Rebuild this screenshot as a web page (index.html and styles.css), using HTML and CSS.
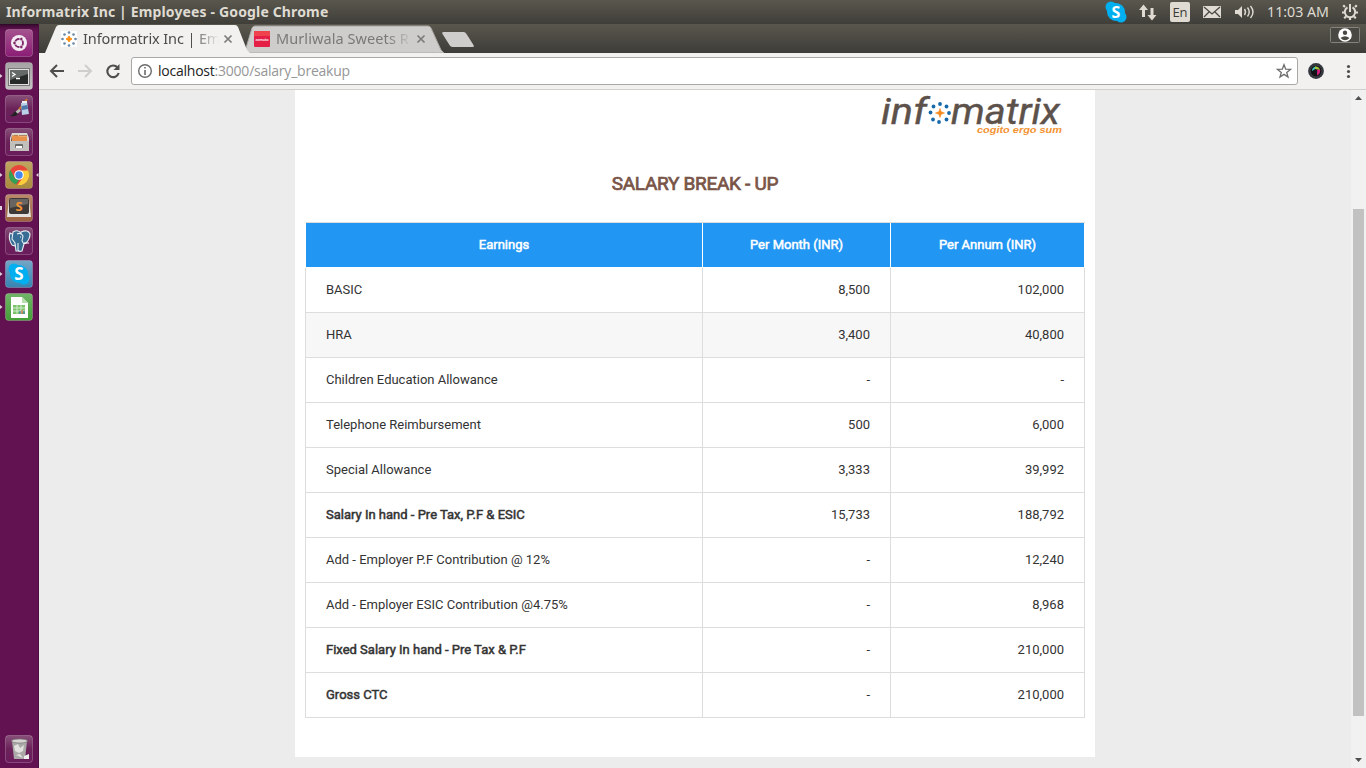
FILE: index.html
```html
<!DOCTYPE html>
<html lang="en">
<head>
<meta charset="utf-8">
<title>Informatrix Inc | Employees</title>
<link rel="stylesheet" href="styles.css">
</head>
<body>
<div class="desktop">
<header class="panel">
  <span class="panel-title">Informatrix Inc | Employees - Google Chrome</span>
  <svg class="indicators" width="266" height="24" viewBox="1100 0 266 24">
    <g fill="#00aff0"><circle cx="1116" cy="12" r="9"/><circle cx="1111" cy="7" r="5.500"/><circle cx="1121" cy="17" r="5.500"/></g>
    <text x="1116" y="18" class="skype-s">S</text>
    <g fill="#dfdbd2">
      <path d="M1143.500 4.500l4.500 5.500h-3v7h-3v-7h-3zM1152 20.500l-4.500-5.500h3V8h3v7h3z"/>
      <rect x="1170" y="2" width="20" height="20" rx="2"/>
      <rect x="1203" y="6" width="18" height="12" rx=".5"/>
      <path d="M1235 10h3l4-4v12l-4-4h-3z"/>
    </g>
    <text x="1180" y="17" class="lang">En</text>
    <path d="M1204 7l8 7 8-7M1204 17l5-5M1220 17l-5-5" fill="none" stroke="#494842" stroke-width="1.300"/>
    <path d="M1244.500 9q2 3 0 6M1247.500 7.500q3.500 4.500 0 9M1250.500 6q5 6 0 12" fill="none" stroke="#dfdbd2" stroke-width="1.400"/>
    <text x="1267" y="17" class="clock" textLength="62" lengthAdjust="spacingAndGlyphs">11:03 AM</text>
    <g fill="none" stroke="#dfdbd2">
      <path d="M1347.500 7.400a5.200 5.200 0 1 0 5 0" stroke-width="2"/>
      <path d="M1350 4v8" stroke-width="2"/>
      <path d="M1345 7l-1.800-1.800M1355 7l1.800-1.800M1344.500 12.500H1342M1355.500 12.500h2.500M1346 16.500l-1.800 1.800M1354 16.500l1.800 1.800M1350 17.500V20" stroke-width="2.200"/>
    </g>
  </svg>
</header>
<div class="workspace">
<nav class="launcher">
  <svg width="39" height="744" viewBox="0 24 39 744">
    <defs>
      <linearGradient id="dash" x2="0" y2="1"><stop stop-color="#a5538f"/><stop offset="1" stop-color="#8b1d75"/></linearGradient>
      <linearGradient id="silver" x2="0" y2="1"><stop stop-color="#a6a3a5"/><stop offset="1" stop-color="#c4c2c3"/></linearGradient>
      <linearGradient id="plum" x2="0" y2="1"><stop stop-color="#875079"/><stop offset=".5" stop-color="#6b2259"/><stop offset="1" stop-color="#6b1c5c"/></linearGradient>
      <linearGradient id="gold" x2="0" y2="1"><stop stop-color="#c0a561"/><stop offset="1" stop-color="#a98b3d"/></linearGradient>
      <linearGradient id="copper" x2="0" y2="1"><stop stop-color="#b98a6b"/><stop offset="1" stop-color="#9c623f"/></linearGradient>
      <linearGradient id="sky" x2="0" y2="1"><stop stop-color="#74a6c6"/><stop offset="1" stop-color="#3684b2"/></linearGradient>
      <linearGradient id="leaf" x2="0" y2="1"><stop stop-color="#71b469"/><stop offset="1" stop-color="#44a036"/></linearGradient>
      <linearGradient id="shade" x2="0" y2="1"><stop stop-color="#2d0825"/><stop offset="1" stop-color="#621151" stop-opacity="0"/></linearGradient>
    </defs>
    <rect y="24" width="39" height="8" fill="url(#shade)"/>
    <path d="M38.500 24V768" stroke="#4d0d40"/>
    <g stroke="#fff" stroke-opacity=".22">
      <rect x="5.500" y="29.500" width="27" height="27" rx="3" fill="url(#dash)"/>
      <rect x="5.500" y="62.500" width="27" height="27" rx="3" fill="url(#silver)"/>
      <rect x="5.500" y="95.500" width="27" height="27" rx="3" fill="url(#plum)"/>
      <rect x="5.500" y="128.500" width="27" height="27" rx="3" fill="url(#plum)"/>
      <rect x="5.500" y="161.500" width="27" height="27" rx="3" fill="url(#gold)"/>
      <rect x="5.500" y="194.500" width="27" height="27" rx="3" fill="url(#copper)"/>
      <rect x="5.500" y="227.500" width="27" height="27" rx="3" fill="url(#plum)"/>
      <rect x="5.500" y="260.500" width="27" height="27" rx="3" fill="url(#sky)"/>
      <rect x="5.500" y="293.500" width="27" height="27" rx="3" fill="url(#leaf)"/>
      <rect x="5.500" y="735.500" width="27" height="27" rx="3" fill="url(#plum)"/>
    </g>
    <circle cx="19" cy="43" r="8" fill="#fff" opacity=".9"/>
    <circle cx="19" cy="43" r="4" fill="none" stroke="#7c2668" stroke-width="1.800"/>
    <g fill="#7c2668" stroke="#fff" stroke-width=".6"><circle cx="14.500" cy="43" r="1.700"/><circle cx="21.300" cy="39" r="1.700"/><circle cx="21.300" cy="47" r="1.700"/></g>
    <rect x="8.500" y="68.500" width="21" height="17" fill="#e1e0df" stroke="#777"/>
    <rect x="10" y="70" width="18" height="14" fill="#272b2a"/><path d="M10 70h18v4L10 80z" fill="#656967"/>
    <path d="M12 72.500l3 2-3 2M16 78.500h4" fill="none" stroke="#fff" stroke-width="1.300"/>
    <path d="M27 99l-9 12" stroke="#c9762c" stroke-width="2"/><path d="M19 109l2 2-4 3-2-2z" fill="#bbb"/><path d="M15 111l3 3q-2 3-8 2 3-1 5-5" fill="#222"/>
    <path d="M21 103l6-1 2 12-7 1z" fill="#b9d0e8"/><path d="M21.500 106l6-1 .5 4-6 1z" fill="#4d76a9"/><path d="M22 102h5" stroke="#eee" stroke-width="2"/>
    <path d="M12 133h15l2 5v13H10v-13z" fill="#d9d7d4"/><path d="M12 135h15v6H11z" fill="#674634"/><path d="M12 136h15v5H12z" fill="#e9904b"/><path d="M12 136l2-1h4l1 1h8" fill="none" stroke="#f5c28a"/>
    <rect x="10" y="141" width="19" height="10" rx="1" fill="#c1c0bd"/><rect x="15" y="144" width="8" height="4" rx="1" fill="#6c6a67"/><rect x="16" y="146" width="6" height="2" fill="#fff"/>
    <circle cx="19" cy="175" r="10" fill="#e9463b"/><path d="M10.300 170l4.500 8 4.200 2-3 4.600A10 10 0 0 1 10.300 170" fill="#34a054"/><path d="M19 170.500h9a10 10 0 0 1-10.500 14.400l5.500-7.500z" fill="#fdcd3c"/><circle cx="19" cy="175" r="4.800" fill="#fff"/><circle cx="19" cy="175" r="3.700" fill="#4687ed"/>
    <path d="M9 199h20l2 18H7z" fill="#e5e1dd"/><rect x="9" y="198" width="20" height="16" rx="2" fill="#3d3a38"/><path d="M10 199h18v5l-18 4z" fill="#686462"/>
    <text x="19" y="210.500" class="sublime-s">S</text>
    <g stroke="#e5edf3" stroke-width="1.100" fill="#376c94"><path d="M10 233q-2 6 2 12l3 1 1-5-2-6z"/><path d="M13 232q5-3 8 1l1 7-3 5v6h-3l-1-8-3-4z"/><path d="M21 232q7-3 9 2 0 5-4 9l-4 1-2-5z"/><path d="M17 234q4-2 6 2l-1 5 2 3-2 7q-3 1-4-1v-7"/></g><path d="M20 237h1M24 243h5" stroke="#fff"/>
    <g fill="#00aff0"><circle cx="19" cy="274" r="9"/><circle cx="14" cy="269" r="5.500"/><circle cx="24" cy="279" r="5.500"/></g>
    <text x="19" y="280" class="skype-s dock-s">S</text>
    <path d="M11 297h11l6 6v15H11z" fill="#fff"/><path d="M22 297l6 6h-6z" fill="#b7dfae"/><rect x="13" y="305" width="12" height="9" fill="#7cc46c"/><path d="M13 308h12M13 311h12M17 305v9M21 305v9" stroke="#e6f5e3" stroke-width=".8"/><path d="M20 314v-3M24 314v-3" stroke="#2870a8"/><path d="M22 314v-4" stroke="#e8503a"/>
    <path d="M12 741h15l-2 18H14z" fill="#aaa9a8"/><ellipse cx="19.500" cy="741" rx="8" ry="2" fill="#d7d6d4" stroke="#777" stroke-width=".7"/><path d="M14 746l4-2 2 4 4-3-1 6-4 2-4-2zM16 755l4-1 3 4" fill="#e2e1df"/><path d="M24 756l5-2v5h-5z" fill="#eee"/>
    <g fill="#ded3dc"><path d="M0 74l2.500 2L0 78zM0 173l2.500 2L0 177zM0 206h2v4H0zM0 272l2.500 2L0 276zM0 305l2.500 2L0 309zM38.500 173l-2.500 2 2.500 2z"/></g>
  </svg>
</nav>
<section class="browser">
  <div class="tabstrip">
    <svg class="tab-shapes" width="1327" height="29" viewBox="39 24 1327 29">
      <path d="M240 53q4-1 6-5l6-20q1-2 3-2h173q2 0 3 2l10 22 3 3z" fill="#cfcdcb" stroke="#aaa8a4"/>
      <path d="M45 53l11-26q1-2 3-2h176q2 0 3 2l9 23 3 3z" fill="#f2f1f0"/>
      <path d="M443.500 32h20q2 0 3 2l7 11q1 2-1 2h-20q-2 0-3-2l-7-11q-1-2 1-2z" fill="#cfcdcb"/>
      <path d="M61 31h16v16H61z" fill="#fff"/>
      <g fill="#6788a7"><circle cx="69" cy="32.500" r="1.300"/><circle cx="73.500" cy="34.500" r="1.300"/><circle cx="75.500" cy="39" r="1.300"/><circle cx="73.500" cy="43.500" r="1.300"/><circle cx="69" cy="45.500" r="1.300"/><circle cx="64.500" cy="43.500" r="1.300"/><circle cx="62.500" cy="39" r="1.300"/><circle cx="64.500" cy="34.500" r="1.300"/></g>
      <path d="M69 36l1 2 2 1-2 1-1 2-1-2-2-1 2-1z" fill="#ff8c0c" stroke="#ff8c0c"/>
      <rect x="254" y="31" width="16" height="16" rx="1" fill="#e51e46"/><path d="M254 32q0-1 1-1h14q1 0 1 1v4h-16z" fill="#f0424d"/>
      <text x="262" y="41" class="fav-word" textLength="13" lengthAdjust="spacingAndGlyphs">zomato</text>
      <path d="M224.500 35.500l7 7m0-7l-7 7M417.500 35.500l7 7m0-7l-7 7" stroke="#7c7b79" stroke-width="1.700"/>
      <rect x="1330.500" y="27.500" width="29" height="15" rx="1" fill="#494843" stroke="#85837c"/>
      <circle cx="1345" cy="35" r="6.800" fill="#fff"/><circle cx="1345" cy="32.700" r="2.200" fill="#494843"/><path d="M1340.500 38q4.500-3.500 9 0-4.500 4.500-9 0" fill="#494843"/>
    </svg>
    <span class="tab-label tab-active">Informatrix Inc | Em</span>
    <span class="tab-label tab-idle">Murliwala Sweets R</span>
  </div>
  <div class="toolbar">
    <svg class="nav-icons" width="84" height="28" viewBox="45 57 84 28">
      <path d="M64 71H51M57 65l-6 6 6 6" fill="none" stroke="#4f4e4d" stroke-width="2"/>
      <path d="M78 71h13M85 65l6 6-6 6" fill="none" stroke="#cfcecd" stroke-width="2"/>
      <path d="M117.500 67.500A5.800 5.800 0 1 0 118.700 73" fill="none" stroke="#4f4e4d" stroke-width="2.100"/><path d="M119.500 64v6h-6z" fill="#4f4e4d"/>
    </svg>
    <div class="omnibox">
      <svg width="16" height="16" viewBox="0 0 16 16"><circle cx="8" cy="8" r="6.300" fill="none" stroke="#6c6c6c" stroke-width="1.400"/><path d="M8 7v5M8 4v1.600" stroke="#6c6c6c" stroke-width="1.600"/></svg>
      <span class="url"><b>localhost</b>:3000/salary_breakup</span>
      <svg class="star" width="16" height="16" viewBox="0 0 16 16"><path d="M8 1.700l1.700 4.500 4.800.2-3.800 3 1.300 4.700-4-2.700-4 2.700 1.300-4.700-3.800-3 4.800-.2z" fill="none" stroke="#6c6c6c" stroke-width="1.300"/></svg>
    </div>
    <svg width="68" height="28" viewBox="1298 57 68 28">
      <circle cx="1316" cy="71" r="7.900" fill="#34373d"/><circle cx="1316" cy="71" r="5.200" fill="#111"/>
      <path d="M1312 71q0-4 4-4.500l-1.500 3z" fill="#3ac8c7"/><path d="M1315 66.500q4-.5 5 3.500l-5-1z" fill="#a3c33b"/><path d="M1317 69.500l3.300.5q0 4-3.300 5.500z" fill="#d0217e"/><circle cx="1315.500" cy="71.500" r="1.800" fill="#151520"/>
      <g fill="#4f4e4d"><circle cx="1348.500" cy="66.500" r="1.600"/><circle cx="1348.500" cy="71.500" r="1.600"/><circle cx="1348.500" cy="76.500" r="1.600"/></g>
    </svg>
  </div>
  <div class="viewport">
    <main class="sheet">
      <svg class="logo" width="184" height="44" viewBox="880 91 184 44">
        <g class="wordmark"><text x="881" y="123.500" textLength="46" lengthAdjust="spacingAndGlyphs">inf</text><text x="951" y="123.500" textLength="109" lengthAdjust="spacingAndGlyphs">matrix</text></g>
        <g fill="#1769a9"><circle cx="940" cy="104" r="1.900"/><circle cx="946.500" cy="106.500" r="1.900"/><circle cx="949" cy="113" r="1.900"/><circle cx="946.500" cy="119.500" r="1.900"/><circle cx="939" cy="122" r="1.900"/><circle cx="933" cy="119.500" r="1.900"/><circle cx="930.500" cy="112.500" r="1.900"/><circle cx="933.500" cy="106.500" r="1.900"/></g>
        <path d="M940 108.500l1.200 3.300 3.300 1.200-3.300 1.200-1.200 3.300-1.200-3.300-3.300-1.200 3.300-1.200z" fill="#f58a20" stroke="#f58a20" stroke-width=".6"/>
        <text x="977" y="132.500" class="tagline" textLength="85" lengthAdjust="spacingAndGlyphs">cogito ergo sum</text>
      </svg>
      <h1 class="heading">SALARY BREAK - UP</h1>
      <div class="salary">
        <div class="row head"><span>Earnings</span><span>Per Month (INR)</span><span>Per Annum (INR)</span></div>
        <div class="row"><span>BASIC</span><span>8,500</span><span>102,000</span></div>
        <div class="row hover"><span>HRA</span><span>3,400</span><span>40,800</span></div>
        <div class="row"><span>Children Education Allowance</span><span>-</span><span>-</span></div>
        <div class="row"><span>Telephone Reimbursement</span><span>500</span><span>6,000</span></div>
        <div class="row"><span>Special Allowance</span><span>3,333</span><span>39,992</span></div>
        <div class="row"><span class="strong">Salary In hand - Pre Tax, P.F &amp; ESIC</span><span>15,733</span><span>188,792</span></div>
        <div class="row"><span>Add - Employer P.F Contribution @ 12%</span><span>-</span><span>12,240</span></div>
        <div class="row"><span>Add - Employer ESIC Contribution @4.75%</span><span>-</span><span>8,968</span></div>
        <div class="row"><span class="strong">Fixed Salary In hand - Pre Tax &amp; P.F</span><span>-</span><span>210,000</span></div>
        <div class="row"><span class="strong">Gross CTC</span><span>-</span><span>210,000</span></div>
      </div>
    </main>
    <div class="scrollbar">
      <svg width="15" height="15" viewBox="0 0 15 15"><path d="M4 10l3.500-4 3.500 4z" fill="#505050"/></svg>
      <div class="thumb"></div>
      <svg width="15" height="15" viewBox="0 0 15 15"><path d="M4 5h7L7.500 9z" fill="#505050"/></svg>
    </div>
  </div>
</section>
</div>
</div>
</body>
</html>
```
FILE: styles.css
```css
* { box-sizing: border-box; }
body { margin: 0; overflow: hidden; font-family: Roboto, sans-serif; }
svg { display: block; flex: none; }
.desktop { width: 1366px; height: 768px; display: flex; flex-direction: column; }
.panel { height: 24px; display: flex; align-items: center; justify-content: space-between; background: linear-gradient(#59574d, #3f3e39); }
.panel-title { padding-left: 6px; font: bold 14px/24px "Noto Sans", sans-serif; letter-spacing: .15px; color: #dfdbd2; white-space: nowrap; }
.skype-s { font: bold 16px "Open Sans", sans-serif; fill: #fff; text-anchor: middle; }
.dock-s { font-size: 17px; }
.lang { font: 13px "Open Sans", sans-serif; fill: #3c3b37; text-anchor: middle; }
.clock { font: 15px "Noto Sans", sans-serif; fill: #dfdbd2; }
.sublime-s { font: bold 13px "Open Sans", sans-serif; fill: #f39335; text-anchor: middle; }
.fav-word { font: bold 4px Lato, sans-serif; fill: #fff; text-anchor: middle; }
.workspace { display: flex; height: 744px; }
.launcher { width: 39px; flex: none; background: #621151; }
.browser { flex: 1; display: flex; flex-direction: column; min-width: 0; }
.tabstrip { position: relative; height: 29px; display: flex; padding-left: 44px; background: linear-gradient(#59574d, #3d3c38); }
.tab-shapes { position: absolute; left: 0; top: 0; }
.tab-label { position: relative; width: 136px; height: 29px; overflow: hidden; white-space: nowrap; font: 14.5px/29px "Noto Sans", sans-serif; }
.tab-active { letter-spacing: -.12px; color: #4c4b49; -webkit-mask-image: linear-gradient(90deg, #000 108px, transparent 136px); }
.tab-idle { margin-left: 57px; letter-spacing: .08px; color: #7b7977; -webkit-mask-image: linear-gradient(90deg, #000 112px, transparent 136px); }
.toolbar { height: 37px; display: flex; align-items: center; padding-left: 6px; background: #f2f1f0; border-bottom: 1px solid #d0cfce; }
.nav-icons { margin-right: 2px; }
.omnibox { width: 1167px; height: 28px; display: flex; align-items: center; padding: 0 5px; background: #fff; border: 1px solid #aaa8a5; border-radius: 3px; }
.url { flex: 1; padding-left: 5px; font: 14px/26px "Open Sans", sans-serif; letter-spacing: -.23px; color: #969696; }
.url b { font-weight: 400; color: #222; }
.viewport { flex: 1; display: flex; justify-content: space-between; padding-left: 256px; background: #ececec; min-height: 0; }
.sheet { width: 800px; height: 667px; padding: 1px 10px 0; background: #fff; display: flex; flex-direction: column; }
.logo { align-self: flex-end; margin-right: 21px; overflow: visible; }
.wordmark { font: italic 36px Roboto, sans-serif; fill: #5c514b; stroke: #5c514b; stroke-width: .4px; }
.tagline { font: italic bold 9px "Liberation Sans", sans-serif; fill: #f39332; }
.heading { margin: 37px 0 26px; text-align: center; font: 400 19px/24px Roboto, sans-serif; letter-spacing: -.3px; color: #795548; -webkit-text-stroke: .7px #795548; }
.row { display: grid; grid-template-columns: 397px 188px 194px; height: 45px; width: 780px; border-left: 1px solid #ddd; font-size: 13px; line-height: 44px; color: #333; }
.row span { border-right: 1px solid #ddd; border-bottom: 1px solid #ddd; padding: 0 20px; text-align: right; white-space: nowrap; }
.row span:first-child { text-align: left; }
.row .strong { -webkit-text-stroke: .5px #333; }
.hover { background: #f7f7f7; }
.row.head { height: 46px; border-left-color: #fff; border-top: 1px solid #ddd; color: #fff; -webkit-text-stroke: .5px #fff; }
.row.head span, .row.head span:first-child { text-align: center; background: #2196f3; border-color: #fff; }
.scrollbar { width: 15px; display: flex; flex-direction: column; justify-content: space-between; background: #f1f1f1; }
.thumb { width: 11px; height: 507px; margin: 104px 2px auto; background: #c1c1c1; }
```
